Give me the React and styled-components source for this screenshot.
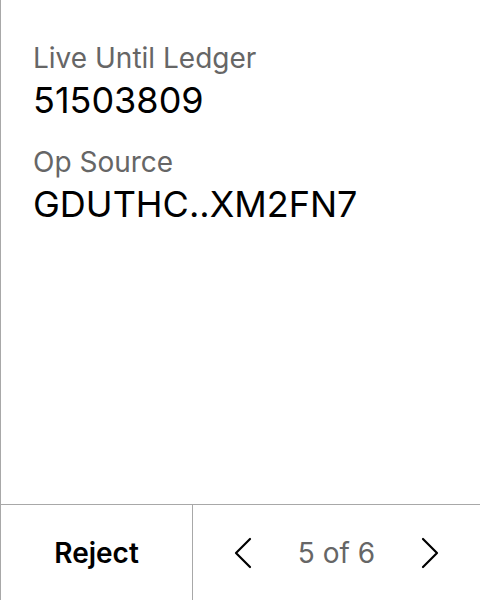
import React from 'react'
import styled, { createGlobalStyle } from 'styled-components'

const Global = createGlobalStyle`
  html, body {
    margin: 0;
    padding: 0;
    background: #ffffff;
  }
  body {
    font-family: 'Inter', 'Noto Sans', sans-serif;
  }
`;

const Screen = styled.div`
  width: 480px;
  height: 600px;
  box-sizing: border-box;
  border-left: 1px solid #a8a8a8;
  display: flex;
  flex-direction: column;
  background: #fff;
`;

const Body = styled.div`
  flex: 1;
  padding: 41px 32px 0;
  display: flex;
  flex-direction: column;
  gap: 23px;
`;

const Field = styled.div`
  display: flex;
  flex-direction: column;
  gap: 3px;
`;

const Label = styled.div`
  font-size: 28px;
  line-height: 34px;
  color: #666666;
`;

const Value = styled.div`
  font-size: 36px;
  line-height: 44px;
  color: #000000;
`;

const Footer = styled.div`
  box-sizing: border-box;
  height: 96px;
  flex-shrink: 0;
  border-top: 1px solid #a8a8a8;
  display: grid;
  grid-template-columns: 192px 1fr;
`;

const RejectButton = styled.button`
  border: none;
  border-right: 1px solid #a8a8a8;
  background: none;
  font-family: inherit;
  font-size: 28px;
  font-weight: 600;
  color: #000;
  padding: 0;
  cursor: pointer;
`;

const Pager = styled.div`
  display: flex;
  align-items: center;
  justify-content: space-between;
  padding: 0 41px 0 41px;
`;

const Arrow = styled.button`
  border: none;
  background: none;
  padding: 0;
  display: flex;
  align-items: center;
  justify-content: center;
  cursor: pointer;
`;

const Count = styled.span`
  font-size: 28px;
  color: #666666;
`;

const Chevron = ({ dir }) => (
  <svg width="18" height="32" viewBox="0 0 18 32" fill="none">
    <path
      d={dir === 'left' ? 'M16 2 L2 16 L16 30' : 'M2 2 L16 16 L2 30'}
      stroke="#000"
      strokeWidth="2.2"
      strokeLinecap="round"
      strokeLinejoin="round"
    />
  </svg>
);

const App = () => (
  <>
    <Global />
    <Screen>
      <Body>
        <Field>
          <Label>Live Until Ledger</Label>
          <Value>51503809</Value>
        </Field>
        <Field>
          <Label>Op Source</Label>
          <Value>GDUTHC..XM2FN7</Value>
        </Field>
      </Body>
      <Footer>
        <RejectButton>Reject</RejectButton>
        <Pager>
          <Arrow><Chevron dir="left" /></Arrow>
          <Count>5 of 6</Count>
          <Arrow><Chevron dir="right" /></Arrow>
        </Pager>
      </Footer>
    </Screen>
  </>
);

export default App;
